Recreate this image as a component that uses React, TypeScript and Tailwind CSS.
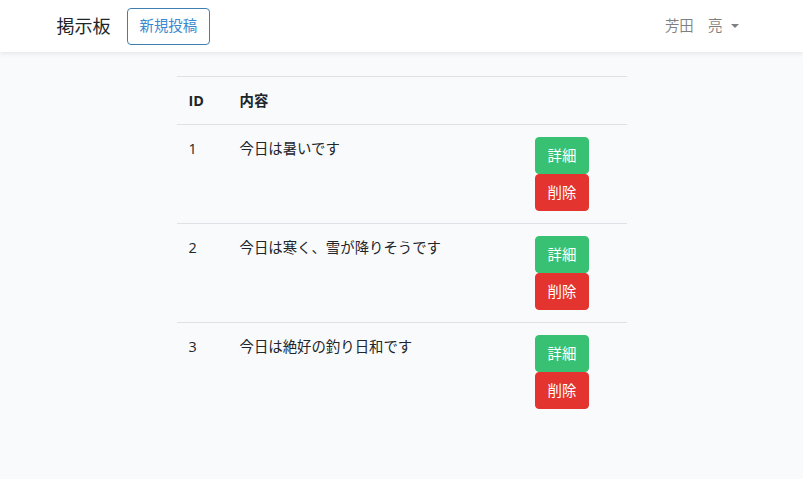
import React from "react";

const posts = [
  { id: 1, body: "今日は暑いです" },
  { id: 2, body: "今日は寒く、雪が降りそうです" },
  { id: 3, body: "今日は絶好の釣り日和です" },
];

const font = {
  fontFamily: '"Open Sans", "Noto Sans CJK JP", sans-serif',
};

export default function App() {
  return (
    <div
      className="min-h-[479px] bg-[#f8fafc] text-[14.4px] leading-[1.6] text-[#212529]"
      style={font}
    >
      {/* Navbar */}
      <nav className="bg-white shadow-[0_2px_4px_rgba(0,0,0,0.075)]">
        <div className="mx-auto flex h-[52px] w-[720px] items-center justify-between px-[15px]">
          <div className="flex items-center">
            <span className="mr-4 text-[18px] leading-[1.6] text-[#212529]">掲示板</span>
            <button className="h-[37px] rounded-[4px] border border-[#3f7fb0] px-3 text-[#3a88cf]">
              新規投稿
            </button>
          </div>
          <button className="flex items-center pl-2 pr-[8px] text-[rgba(0,0,0,0.5)]">
            芳田　亮
            <span className="ml-[8px] inline-block h-0 w-0 border-x-[4px] border-t-[4.5px] border-x-transparent border-t-[rgba(0,0,0,0.5)]" />
          </button>
        </div>
      </nav>

      {/* Posts */}
      <div className="mx-auto mt-6 w-[450px]">
        <table className="w-full border-collapse">
          <thead>
            <tr className="border-t border-[#dee2e6]">
              <th className="w-[51px] p-3 text-left font-bold">ID</th>
              <th className="w-[295px] p-3 text-left font-bold">内容</th>
              <th className="w-[104px] p-3" />
            </tr>
          </thead>
          <tbody>
            {posts.map((post) => (
              <tr key={post.id} className="border-t border-[#dee2e6] align-top">
                <td className="p-3">{post.id}</td>
                <td className="p-3">{post.body}</td>
                <td className="p-3">
                  <div className="flex flex-col items-start">
                    <button className="h-[37px] rounded-[4px] border border-[#38c172] bg-[#38c172] px-3 text-white">
                      詳細
                    </button>
                    <button className="h-[37px] rounded-[4px] border border-[#e3342f] bg-[#e3342f] px-3 text-white">
                      削除
                    </button>
                  </div>
                </td>
              </tr>
            ))}
          </tbody>
        </table>
      </div>
    </div>
  );
}
